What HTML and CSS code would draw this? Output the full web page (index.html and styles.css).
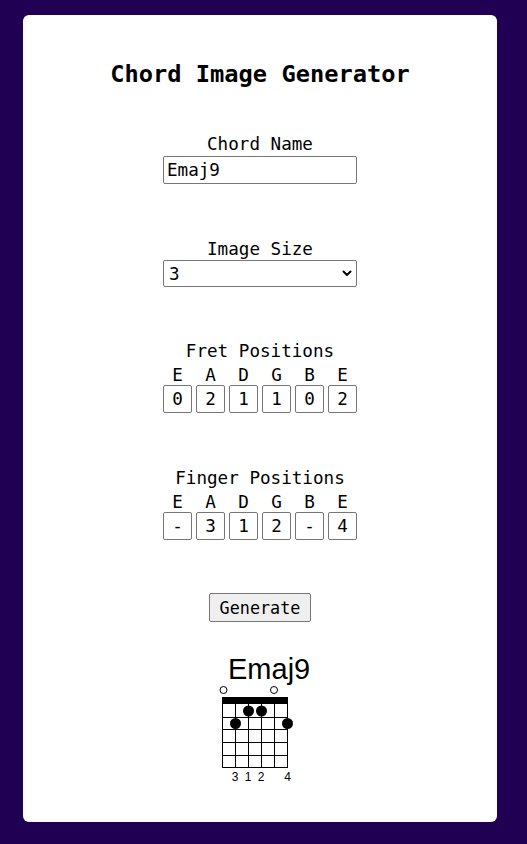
FILE: index.html
```html
<!DOCTYPE html>
<html>
<head>
<meta charset="utf-8">
<title>Chord Image Generator</title>
<link rel="stylesheet" href="styles.css">
</head>
<body>
<div class="card">
  <h1 class="title">Chord Image Generator</h1>

  <div class="field field-name">
    <label class="label">Chord Name</label>
    <input class="text-input" type="text" value="Emaj9">
  </div>

  <div class="field field-size">
    <label class="label">Image Size</label>
    <div class="select-wrap">
      <select class="select"><option>3</option></select>
      <svg class="chevron" width="10" height="7" viewBox="0 0 10 7"><path d="M1.5 1.5 L5 5 L8.5 1.5" fill="none" stroke="#000" stroke-width="2" stroke-linecap="round" stroke-linejoin="round"/></svg>
    </div>
  </div>

  <div class="field field-fret">
    <label class="label">Fret Positions</label>
    <div class="strings"><span>E</span><span>A</span><span>D</span><span>G</span><span>B</span><span>E</span></div>
    <div class="boxes">
      <input class="box" value="0"><input class="box" value="2"><input class="box" value="1"><input class="box" value="1"><input class="box" value="0"><input class="box" value="2">
    </div>
  </div>

  <div class="field field-finger">
    <label class="label">Finger Positions</label>
    <div class="strings"><span>E</span><span>A</span><span>D</span><span>G</span><span>B</span><span>E</span></div>
    <div class="boxes">
      <input class="box" value="-"><input class="box" value="3"><input class="box" value="1"><input class="box" value="2"><input class="box" value="-"><input class="box" value="4">
    </div>
  </div>

  <button class="generate">Generate</button>

  <svg class="chord" width="120" height="145" viewBox="0 0 120 145">
    <text x="28" y="34" class="chord-name">Emaj9</text>
    <circle cx="23.5" cy="45" r="3.5" fill="#fff" stroke="#000" stroke-width="1"/>
    <circle cx="74" cy="45" r="3.5" fill="#fff" stroke="#000" stroke-width="1"/>
    <rect x="22" y="52" width="66" height="7" fill="#000"/>
    <g stroke="#000" stroke-width="1">
      <line x1="22.5" y1="52" x2="22.5" y2="122.5"/>
      <line x1="35.5" y1="52" x2="35.5" y2="122.5"/>
      <line x1="48.5" y1="52" x2="48.5" y2="122.5"/>
      <line x1="61.5" y1="52" x2="61.5" y2="122.5"/>
      <line x1="74.5" y1="52" x2="74.5" y2="122.5"/>
      <line x1="87.5" y1="52" x2="87.5" y2="122.5"/>
      <line x1="22" y1="72.5" x2="88" y2="72.5"/>
      <line x1="22" y1="84.5" x2="88" y2="84.5"/>
      <line x1="22" y1="97.5" x2="88" y2="97.5"/>
      <line x1="22" y1="110.5" x2="88" y2="110.5"/>
      <line x1="22" y1="122.5" x2="88" y2="122.5"/>
    </g>
    <circle cx="48.5" cy="66" r="5.5" fill="#000"/>
    <circle cx="61.5" cy="66" r="5.5" fill="#000"/>
    <circle cx="35.5" cy="78.5" r="5.5" fill="#000"/>
    <circle cx="87.5" cy="78.5" r="5.5" fill="#000"/>
    <g class="finger">
      <text x="35" y="136">3</text>
      <text x="48" y="136">1</text>
      <text x="61" y="136">2</text>
      <text x="87.5" y="136">4</text>
    </g>
  </svg>
</div>
</body>
</html>
```

FILE: styles.css
```css
html, body {
  margin: 0;
  padding: 0;
}

body {
  background: #200052;
  padding: 15px 0 0 23px;
  height: 844px;
  box-sizing: border-box;
  font-family: "DejaVu Sans Mono", "Liberation Mono", monospace;
  font-size: 17.6px;
  color: #000;
}

.card {
  width: 474px;
  height: 807px;
  box-sizing: border-box;
  background: #fff;
  border-radius: 6px;
  padding-top: 45px;
  display: flex;
  flex-direction: column;
  align-items: center;
}

.title {
  margin: 0;
  font-size: 23.7px;
  line-height: 28px;
  font-weight: bold;
}

.field {
  display: flex;
  flex-direction: column;
  align-items: center;
}

.label {
  line-height: 20px;
}

.field-name { margin-top: 46px; }
.field-size { margin-top: 55px; }
.field-fret { margin-top: 54px; }
.field-finger { margin-top: 55px; }

.text-input {
  margin-top: 2px;
  width: 194px;
  height: 28px;
  box-sizing: border-box;
  border: 1px solid #767676;
  border-radius: 2px;
  padding: 0 3px;
  font-family: "DejaVu Sans Mono", "Liberation Mono", monospace;
  font-size: 17.6px;
  color: #000;
  background: #fff;
}

.select-wrap {
  position: relative;
  margin-top: 1px;
  width: 194px;
  height: 27px;
}

.select {
  appearance: none;
  -webkit-appearance: none;
  width: 194px;
  height: 27px;
  box-sizing: border-box;
  border: 1px solid #767676;
  border-radius: 2px;
  padding: 0 5px;
  font-family: "DejaVu Sans Mono", "Liberation Mono", monospace;
  font-size: 17.6px;
  color: #000;
  background: #fff;
}

.chevron {
  position: absolute;
  right: 5px;
  top: 10px;
  pointer-events: none;
}

.strings,
.boxes {
  display: grid;
  grid-template-columns: repeat(6, 29px);
  column-gap: 4px;
}

.strings {
  margin-top: 4px;
  line-height: 20px;
  text-align: center;
}

.box {
  width: 29px;
  height: 28px;
  box-sizing: border-box;
  border: 1px solid #767676;
  border-radius: 2px;
  padding: 0;
  text-align: center;
  font-family: "DejaVu Sans Mono", "Liberation Mono", monospace;
  font-size: 17.6px;
  color: #000;
  background: #fff;
}

.generate {
  margin-top: 53px;
  height: 29px;
  width: 102px;
  box-sizing: border-box;
  padding: 0;
  border: 1px solid #767676;
  border-radius: 2px;
  background: #efefef;
  font-family: "DejaVu Sans Mono", "Liberation Mono", monospace;
  font-size: 16.8px;
  color: #000;
}

.chord {
  display: block;
  margin-top: 23px;
}

.chord-name {
  font-family: "Liberation Sans", Arial, sans-serif;
  font-size: 29px;
  fill: #000;
}

.finger text {
  font-family: "Liberation Sans", Arial, sans-serif;
  font-size: 12px;
  text-anchor: middle;
  fill: #000;
}
```
